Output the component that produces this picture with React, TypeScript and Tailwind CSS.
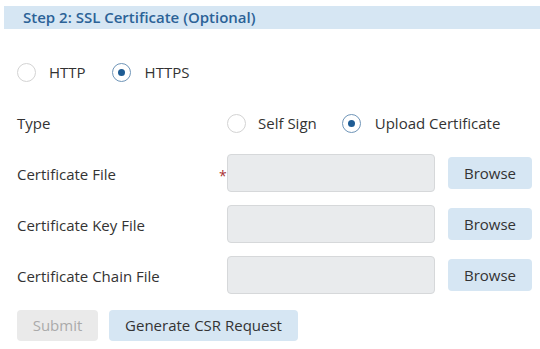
function Radio({ checked }: { checked?: boolean }) {
  return (
    <span
      className={
        'flex h-[19px] w-[19px] shrink-0 items-center justify-center rounded-full border bg-white ' +
        (checked ? 'border-[#6f95b8]' : 'border-[#d3d3d3]')
      }
    >
      {checked && <span className="h-[7px] w-[7px] rounded-full bg-[#1e5c94]" />}
    </span>
  );
}

function FileRow({ label, required }: { label: string; required?: boolean }) {
  return (
    <div className="flex h-[38px] items-center">
      <span className="w-[202px] shrink-0 pt-[3px]">{label}</span>
      <span className="w-[8px] shrink-0 pt-[4px] text-[14px] text-[#a83232]">{required ? '*' : ''}</span>
      <div className="h-[38px] w-[208px] shrink-0 rounded-[4px] border border-[#d6d8da] bg-[#e9ebed]" />
      <button className="ml-[13px] h-[32px] w-[84px] shrink-0 rounded-[4px] bg-[#d6e6f3] text-[15px] text-[#333]">
        Browse
      </button>
    </div>
  );
}

export default function App() {
  return (
    <div className="h-[349px] w-[540px] overflow-hidden bg-white font-['Open_Sans',sans-serif] text-[15px] text-[#333]">
      <div className="pl-[4px] pt-[6px]">
        <div className="flex h-[23px] items-center bg-[#d6e6f3] pl-[19px] text-[15px] font-semibold text-[#2b6297]">
          Step 2: SSL Certificate (Optional)
        </div>
      </div>

      <div className="pl-[17px] pr-[6px]">
        <div className="mt-[34px] flex h-[19px] items-center">
          <Radio />
          <span className="ml-[13px]">HTTP</span>
          <span className="ml-[26px]">
            <Radio checked />
          </span>
          <span className="ml-[14px]">HTTPS</span>
        </div>

        <div className="mt-[22px] flex h-[38px] items-center">
          <span className="w-[210px] shrink-0">Type</span>
          <Radio />
          <span className="ml-[12px]">Self Sign</span>
          <span className="ml-[25px]">
            <Radio checked />
          </span>
          <span className="ml-[14px]">Upload Certificate</span>
        </div>

        <div className="mt-[12px] flex flex-col gap-[13px]">
          <FileRow label="Certificate File" required />
          <FileRow label="Certificate Key File" />
          <FileRow label="Certificate Chain File" />
        </div>

        <div className="mt-[16px] flex gap-[11px]">
          <button className="h-[31px] w-[81px] rounded-[4px] bg-[#eaeaea] text-[15px] text-[#aaaaaa]">Submit</button>
          <button className="h-[31px] w-[189px] rounded-[4px] bg-[#d6e6f3] text-[15px] text-[#333]">
            Generate CSR Request
          </button>
        </div>
      </div>
    </div>
  );
}
